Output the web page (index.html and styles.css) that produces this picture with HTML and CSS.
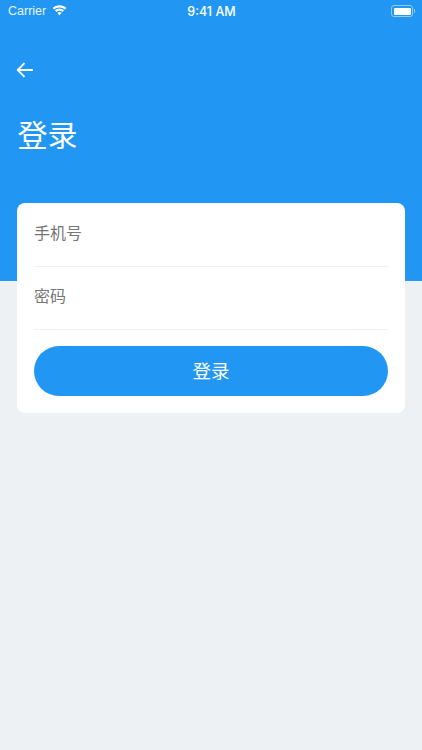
FILE: index.html
```html
<!DOCTYPE html>
<html lang="zh-CN">
<head>
    <meta charset="UTF-8">
    <meta name="viewport" content="width=device-width, initial-scale=1.0">
    <title>登录</title>
    <link rel="stylesheet" href="styles.css">
</head>
<body>
    <header class="header">
        <div class="status-bar">
            <div class="status-left">
                <span class="carrier">Carrier</span>
                <svg class="wifi" width="15" height="11" viewBox="0 0 16 12">
                    <path d="M8 2.600c2.300 0 4.300.9 5.900 2.300l1.600-1.700C13.500 1.300 10.900.2 8 .2S2.500 1.300.5 3.200l1.600 1.700C3.700 3.500 5.700 2.600 8 2.600z" fill="#fff"/>
                    <path d="M8 6.200c1.300 0 2.400.5 3.300 1.300l1.600-1.700C11.600 4.600 9.900 3.800 8 3.800s-3.600.8-4.900 2l1.600 1.700c.9-.8 2-1.300 3.300-1.300z" fill="#fff"/>
                    <path d="M8 7.600c-.9 0-1.700.3-2.300.9L8 11.400l2.300-2.900c-.6-.6-1.400-.9-2.300-.9z" fill="#fff"/>
                </svg>
            </div>
            <span class="time">9:41 AM</span>
            <div class="status-right">
                <div class="battery"><div class="battery-level"></div></div>
                <div class="battery-cap"></div>
            </div>
        </div>
        <button class="back-btn" aria-label="返回">
            <svg width="18" height="16" viewBox="0 0 18 16">
                <path d="M17 8H2M8.500 1.200 1.700 8l6.800 6.800" fill="none" stroke="#fff" stroke-width="1.800"/>
            </svg>
        </button>
        <h1 class="page-title">登录</h1>
    </header>

    <main class="card">
        <div class="field">手机号</div>
        <div class="field">密码</div>
        <button class="login-btn">登录</button>
    </main>
</body>
</html>
```

FILE: styles.css
```css
* {
    margin: 0;
    padding: 0;
    box-sizing: border-box;
}

body {
    font-family: "Noto Sans CJK SC", "Liberation Sans", sans-serif;
    background: #edf1f4;
    min-height: 100vh;
    overflow: hidden;
}

.header {
    height: 281px;
    background: #2196f3;
    color: white;
}

.status-bar {
    height: 22px;
    padding: 0 7px 0 8px;
    display: grid;
    grid-template-columns: 1fr auto 1fr;
    align-items: center;
    font-family: Inter, "Liberation Sans", sans-serif;
    font-size: 12.5px;
}

.status-left {
    display: flex;
    align-items: center;
    gap: 6px;
}

.carrier {
    font-family: "Liberation Sans", sans-serif;
    opacity: 0.9;
}

.wifi {
    margin-top: -1px;
}

.time {
    font-weight: 500;
}

.status-right {
    display: flex;
    align-items: center;
    justify-content: flex-end;
}

.battery {
    width: 22px;
    height: 12px;
    padding: 1.5px;
    border: 1px solid rgba(255, 255, 255, 0.5);
    border-radius: 3px;
}

.battery-level {
    height: 100%;
    background: white;
    border-radius: 1px;
}

.battery-cap {
    width: 1px;
    height: 4px;
    margin-left: 1px;
    background: rgba(255, 255, 255, 0.5);
}

.back-btn {
    display: block;
    margin: 40px 0 0 16px;
    height: 16px;
    background: none;
    border: none;
}

.page-title {
    margin: 33px 0 0 17.5px;
    font-size: 30px;
    font-weight: 400;
    line-height: 44px;
}

.card {
    width: 388px;
    height: 210px;
    margin: -78px 0 0 17px;
    padding: 0.5px 17px 0;
    background: white;
    border-radius: 8px;
}

.field {
    height: 63px;
    padding-top: 16px;
    border-bottom: 1px solid #eef0f2;
    color: #777;
    font-size: 16px;
    line-height: 24px;
}

.login-btn {
    display: block;
    width: 100%;
    height: 50px;
    margin-top: 16.5px;
    padding-bottom: 2px;
    background: #2196f3;
    border: none;
    border-radius: 25px;
    color: white;
    font-family: inherit;
    font-size: 18.5px;
}
```
